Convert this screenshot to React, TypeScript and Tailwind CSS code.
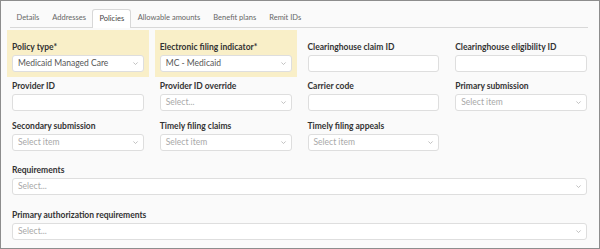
import React from 'react';

const tabs = ['Details', 'Addresses', 'Policies', 'Allowable amounts', 'Benefit plans', 'Remit IDs'];

function Chevron() {
  return (
    <svg className="w-[7px] h-[7px] text-[#b5b5b5]" viewBox="0 0 10 10" fill="none" stroke="currentColor" strokeWidth={1.2}>
      <path d="M2 3.5l3 3 3-3" />
    </svg>
  );
}

function TextInput() {
  return <div className="h-[17px] bg-white border border-[#dedede] rounded-[3px]" />;
}

function SelectInput({ value, placeholder }: { value?: string; placeholder?: string }) {
  return (
    <div className="h-[17px] bg-white border border-[#dedede] rounded-[3px] flex items-center justify-between pl-[5px] pr-[4px]">
      <span className={value ? 'text-[#555] text-[8.5px]' : 'text-[#a8a8a8] text-[8.5px]'}>{value ?? placeholder}</span>
      <Chevron />
    </div>
  );
}

function Field({ label, children }: { label: string; children: React.ReactNode }) {
  return (
    <div>
      <div className="text-[8.5px] font-bold text-[#333] leading-[12px] mb-[2px]">{label}</div>
      {children}
    </div>
  );
}

export default function App() {
  return (
    <div className="w-[600px] h-[249px] bg-[#fafafa] border border-[#8d8d8d] overflow-hidden" style={{ fontFamily: 'Lato, "Liberation Sans", sans-serif' }}>
      {/* tabs */}
      <div className="mt-[8px] ml-[9px] mr-[11px] flex items-end border-b border-[#d8d8d8] h-[19px]">
        {tabs.map((t) => (
          <div
            key={t}
            className={
              t === 'Policies'
                ? 'h-[19px] px-[6px] flex items-center text-[7.5px] text-[#444] bg-white border border-b-0 border-[#d8d8d8] rounded-t-[3px] -mb-px'
                : 'h-[18px] px-[6.5px] flex items-center text-[7.5px] text-[#666]'
            }
          >
            {t}
          </div>
        ))}
      </div>

      <div className="pl-[11px] pr-[12px]">
        {/* row 1 */}
        <div className="grid grid-cols-4 gap-x-4 mt-[2px]">
          <div className="bg-[#f9efc8] -mx-[5px] px-[5px] pt-[11px] pb-[5px]">
            <Field label="Policy type*">
              <SelectInput value="Medicaid Managed Care" />
            </Field>
          </div>
          <div className="bg-[#f9efc8] -mx-[5px] px-[5px] pt-[11px] pb-[5px]">
            <Field label="Electronic filing indicator*">
              <SelectInput value="MC - Medicaid" />
            </Field>
          </div>
          <div className="pt-[11px] pb-[5px]">
            <Field label="Clearinghouse claim ID">
              <TextInput />
            </Field>
          </div>
          <div className="pt-[11px] pb-[5px]">
            <Field label="Clearinghouse eligibility ID">
              <TextInput />
            </Field>
          </div>
        </div>

        {/* row 2 */}
        <div className="grid grid-cols-4 gap-x-4 mt-[3px]">
          <Field label="Provider ID">
            <TextInput />
          </Field>
          <Field label="Provider ID override">
            <SelectInput placeholder="Select..." />
          </Field>
          <Field label="Carrier code">
            <TextInput />
          </Field>
          <Field label="Primary submission">
            <SelectInput placeholder="Select item" />
          </Field>
        </div>

        {/* row 3 */}
        <div className="grid grid-cols-4 gap-x-4 mt-[9px]">
          <Field label="Secondary submission">
            <SelectInput placeholder="Select item" />
          </Field>
          <Field label="Timely filing claims">
            <SelectInput placeholder="Select item" />
          </Field>
          <Field label="Timely filing appeals">
            <SelectInput placeholder="Select item" />
          </Field>
        </div>

        <div className="mt-[13px]">
          <Field label="Requirements">
            <SelectInput placeholder="Select..." />
          </Field>
        </div>
        <div className="mt-[14px]">
          <Field label="Primary authorization requirements">
            <SelectInput placeholder="Select..." />
          </Field>
        </div>
      </div>
    </div>
  );
}
